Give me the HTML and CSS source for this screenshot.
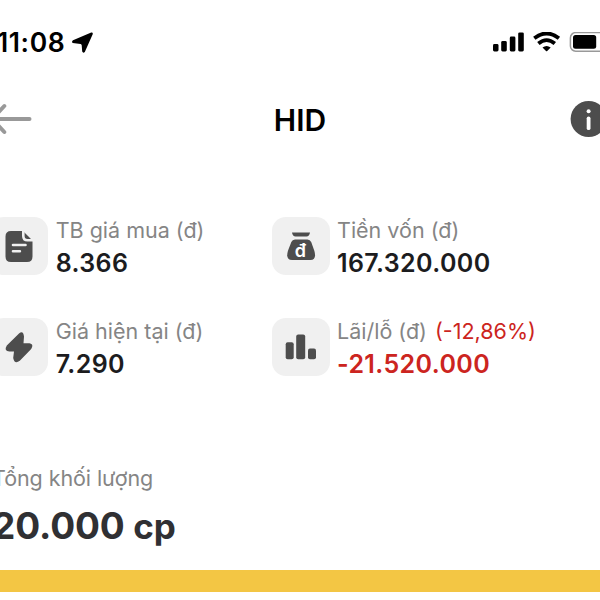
FILE: index.html
```html
<!DOCTYPE html>
<html lang="vi">
<head>
<meta charset="utf-8">
<title>HID</title>
<link rel="stylesheet" href="styles.css">
</head>
<body>
<div class="screen">
  <div class="status">
    <span class="time">11:08</span>
    <svg class="loc" width="22" height="22" viewBox="0 0 22 22"><path d="M19.2.5 1 8.2Q-.7 9.4.7 11L8.6 12Q9.6 12.2 9.7 13.2L10.2 19.6Q11.2 21.6 12.8 19.9L20.8 2Q21 .1 19.2.5Z"/></svg>
    <svg class="signals" width="108" height="22" viewBox="0 0 108 22">
      <rect x="1" y="12" width="5.5" height="7.5" rx="1.4"/><rect x="9.2" y="9" width="5.6" height="10.5" rx="1.4"/><rect x="17.8" y="4.5" width="5.6" height="15" rx="1.4"/><rect x="26.2" y="0.4" width="5.6" height="19.1" rx="1.4"/>
      <g fill="none" stroke="#000" stroke-width="3.8"><path d="M42.3 6.3Q54.6-3.4 66.9 6.3"/><path d="M46.4 11.5Q54.6 4.7 62.8 11.5"/></g>
      <path d="M50.5 15.6Q54.6 12.3 58.7 15.6L55.2 19Q54.6 19.5 54 19Z"/>
      <rect x="78.4" y=".6" width="40" height="18.6" rx="5.3" fill="none" stroke="#999" stroke-width="1.5"/><rect x="81" y="3" width="23.2" height="13.8" rx="2.5"/>
    </svg>
  </div>
  <header class="nav">
    <svg class="back" width="34" height="32" viewBox="0 0 34 32"><path d="M29.5 16H-8M4.3 3-8 16 4.3 29" fill="none" stroke="#999" stroke-width="4" stroke-linecap="round"/></svg>
    <h1>HID</h1>
    <svg class="info" width="36" height="38" viewBox="0 0 36 38"><circle cx="18.6" cy="19" r="18" fill="#4d4d4d"/><circle cx="18.6" cy="11.3" r="2" fill="#fff"/><path d="M18.6 18.3V28.2" stroke="#fff" stroke-width="3.8" stroke-linecap="round"/></svg>
  </header>
  <main class="stats">
    <section class="stat">
      <div class="tile"><svg width="58" height="58" viewBox="3.5 0 58 58"><path d="M20 14H36.5L46 23.5V39.5Q46 45 40.5 45H24.5Q19 45 19 39.5V19.5Q19 14 24.5 14Z"/><path d="M36.8 13.5V19Q36.8 23.3 41 23.3H46.6M26.5 28H39M26.5 34.2H33.4" fill="none" stroke="#f0f0f0" stroke-width="2.6" stroke-linecap="round"/></svg></div>
      <div class="copy left"><p class="label">TB giá mua (đ)</p><p class="value">8.366</p></div>
    </section>
    <section class="stat">
      <div class="tile"><svg width="58" height="58" viewBox="0 0 58 58"><path d="M20 15.5H38Q37.3 19.6 34.5 19.6H23.5Q20.7 19.6 20 15.5Z"/><path d="M23 22.5H35.5Q38 22.5 39.2 25L42.4 34Q44.8 43 38.5 43H20Q13.4 43 15.9 34L19.3 25Q20.3 22.5 23 22.5Z"/><text x="22.7" y="39.6">đ</text></svg></div>
      <div class="copy"><p class="label">Tiền vốn (đ)</p><p class="value">167.320.000</p></div>
    </section>
    <section class="stat">
      <div class="tile"><svg width="58" height="58" viewBox="0 0 58 58"><path d="M29 15.5 16.8 27.5Q13.5 33 19.5 33.4H24L23.2 40Q24.5 46.8 29.8 42.8L41.2 31Q44.2 26 39.5 25.2H33.5L34 18.5Q33.2 11.8 29 15.5Z"/></svg></div>
      <div class="copy left"><p class="label">Giá hiện tại (đ)</p><p class="value">7.290</p></div>
    </section>
    <section class="stat">
      <div class="tile"><svg width="58" height="58" viewBox="0 0 58 58"><rect x="13.7" y="24.3" width="8" height="17" rx="2"/><rect x="24.2" y="16.6" width="9" height="24.7" rx="2"/><rect x="36" y="30.5" width="8" height="10.8" rx="2"/></svg></div>
      <div class="copy"><p class="label">Lãi/lỗ (đ) <span class="loss pct">(-12,86%)</span></p><p class="value loss">-21.520.000</p></div>
    </section>
  </main>
  <section class="total">
    <p class="label">Tổng khối lượng</p>
    <p class="amount">20.000 <span class="unit">cp</span></p>
  </section>
  <div class="bar"></div>
</div>
</body>
</html>
```
FILE: styles.css
```css
* { box-sizing: border-box; margin: 0; padding: 0; }
body { width: 600px; height: 600px; overflow: hidden; background: #fff; font-family: Inter, sans-serif; }
.screen { width: 600px; height: 600px; overflow: hidden; }
svg { display: block; flex: none; }
.status { display: flex; height: 84px; padding-top: 32px; }
.time { width: 72px; margin-left: -3px; font-size: 26.5px; line-height: 20px; font-weight: 600; letter-spacing: 0.6px; white-space: nowrap; }
.loc { margin-left: 3px; }
.signals { margin-left: auto; }
.nav { display: grid; grid-template-columns: 1fr auto 1fr; align-items: center; height: 70px; }
.nav h1 { font-size: 30px; line-height: 36px; font-weight: 600; padding-top: 2px; }
.info { justify-self: end; margin-right: -6px; }
.stats { display: grid; grid-template-columns: 282px 320px; row-gap: 43px; margin-left: -10px; padding-top: 63px; }
.stat { display: flex; gap: 7px; height: 58px; }
.tile { width: 58px; height: 58px; flex: none; border-radius: 14px; background: #f0f0f0; fill: #4d4d4d; }
.tile text { font: 600 18px Inter, sans-serif; fill: #fff; }
.copy { margin-top: -1px; }
.left { padding-left: 0.7px; }
.label { font-size: 21.5px; line-height: 28px; color: #858585; white-space: nowrap; }
.value { margin-top: 2px; font-size: 25px; line-height: 34px; font-weight: 600; letter-spacing: 0.4px; color: #1c1c1e; white-space: nowrap; }
.loss { color: #cc2420; }
.pct { margin-left: 2px; }
.total { padding-top: 88px; margin-left: -8px; height: 194px; }
.total .label { letter-spacing: -0.07px; }
.amount { margin-top: 14px; font-weight: 700; font-size: 37px; line-height: 40px; letter-spacing: -0.1px; color: #303033; white-space: nowrap; }
.unit { font-size: 35px; }
.bar { height: 22px; background: #f3c644; }
```
